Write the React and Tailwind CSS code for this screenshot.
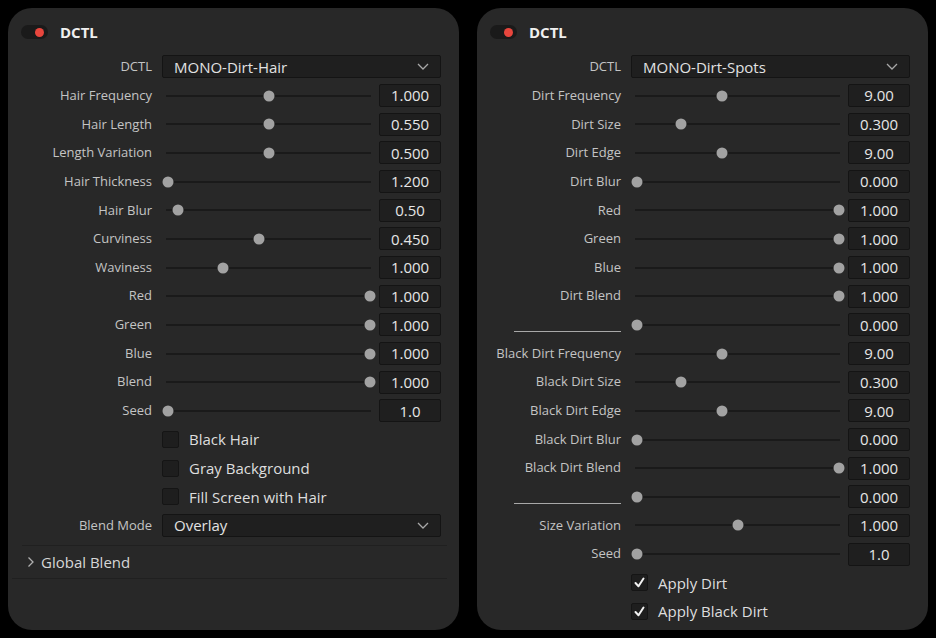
import React from 'react';

const leftSliders = [
  { label: 'Hair Frequency', f: 0.5, value: '1.000' },
  { label: 'Hair Length', f: 0.5, value: '0.550' },
  { label: 'Length Variation', f: 0.5, value: '0.500' },
  { label: 'Hair Thickness', f: 0, value: '1.200' },
  { label: 'Hair Blur', f: 0.05, value: '0.50' },
  { label: 'Curviness', f: 0.45, value: '0.450' },
  { label: 'Waviness', f: 0.27, value: '1.000' },
  { label: 'Red', f: 1, value: '1.000' },
  { label: 'Green', f: 1, value: '1.000' },
  { label: 'Blue', f: 1, value: '1.000' },
  { label: 'Blend', f: 1, value: '1.000' },
  { label: 'Seed', f: 0, value: '1.0' },
];

const rightSliders = [
  { label: 'Dirt Frequency', f: 0.42, value: '9.00' },
  { label: 'Dirt Size', f: 0.22, value: '0.300' },
  { label: 'Dirt Edge', f: 0.42, value: '9.00' },
  { label: 'Dirt Blur', f: 0, value: '0.000' },
  { label: 'Red', f: 1, value: '1.000' },
  { label: 'Green', f: 1, value: '1.000' },
  { label: 'Blue', f: 1, value: '1.000' },
  { label: 'Dirt Blend', f: 1, value: '1.000' },
  { label: null, f: 0, value: '0.000' },
  { label: 'Black Dirt Frequency', f: 0.42, value: '9.00' },
  { label: 'Black Dirt Size', f: 0.22, value: '0.300' },
  { label: 'Black Dirt Edge', f: 0.42, value: '9.00' },
  { label: 'Black Dirt Blur', f: 0, value: '0.000' },
  { label: 'Black Dirt Blend', f: 1, value: '1.000' },
  { label: null, f: 0, value: '0.000' },
  { label: 'Size Variation', f: 0.5, value: '1.000' },
  { label: 'Seed', f: 0, value: '1.0' },
];

const Chevron = () => (
  <svg width="12" height="7" viewBox="0 0 12 7" fill="none">
    <path d="M1 1l5 5 5-5" stroke="#a8a8a8" strokeWidth="1.3" />
  </svg>
);

const Label = ({ children }) => (
  <div className="w-[154px] shrink-0 pr-[10px] text-right text-[13px] text-[#c4c4c4]">{children}</div>
);

const Row = ({ label, children }) => (
  <div className="flex h-[28.67px] items-center">
    <Label>{label}</Label>
    <div className="flex w-[279px] items-center">{children}</div>
  </div>
);

const Dropdown = ({ value }) => (
  <div className="flex h-[23px] w-[279px] items-center justify-between rounded-[2px] border border-[#141414] bg-[#1f1f1f] pl-[11px] pr-[11px] text-[15px] text-[#e2e2e2]">
    <span>{value}</span>
    <Chevron />
  </div>
);

const Slider = ({ f, value }) => (
  <>
    <div className="relative ml-[4px] mr-[8px] h-[2px] flex-1 bg-[#1a1a1a]">
      <div className="absolute inset-y-0 left-[2px] right-[1px]">
        <div
          className="absolute top-1/2 h-[11px] w-[11px] -translate-x-1/2 -translate-y-1/2 rounded-full bg-[#a2a2a2]"
          style={{ left: `${f * 100}%` }}
        />
      </div>
    </div>
    <div className="flex h-[23px] w-[62px] items-center justify-center rounded-[2px] border border-[#141414] bg-[#1f1f1f] text-[15px] text-[#e6e6e6]">
      {value}
    </div>
  </>
);

const Check = ({ checked, label }) => (
  <Row label="">
    <div className="flex h-[17px] w-[17px] items-center justify-center rounded-[2px] border border-[#151515] bg-[#1e1e1e]">
      {checked && (
        <svg width="13" height="13" viewBox="0 0 13 13" fill="none">
          <path d="M2.5 7l3 3.2L10.5 2.5" stroke="#f2f2f2" strokeWidth="2" strokeLinecap="round" strokeLinejoin="round" />
        </svg>
      )}
    </div>
    <span className="ml-[10px] text-[15px] text-[#dedede]">{label}</span>
  </Row>
);

const Header = () => (
  <div className="flex h-[28px] items-center pl-[13px]">
    <div className="flex h-[14px] w-[27px] items-center justify-end rounded-full bg-[#1a1a1a] pr-[4px]">
      <div className="h-[9px] w-[9px] rounded-full bg-[#e8463d]" />
    </div>
    <span className="ml-[12px] text-[15px] font-bold text-[#f0f0f0]">DCTL</span>
  </div>
);

const Panel = ({ children }) => (
  <div className="flex h-[622px] w-[451px] flex-col rounded-[24px] bg-[#282828] pt-[10px]">{children}</div>
);

export default function App() {
  return (
    <div
      className="flex h-[638px] w-[936px] gap-[18px] bg-black pl-[8px] pt-[8px]"
      style={{ fontFamily: '"Open Sans", "Noto Sans", sans-serif' }}
    >
      <Panel>
        <Header />
        <div className="mt-[6.67px]">
          <Row label="DCTL">
            <Dropdown value="MONO-Dirt-Hair" />
          </Row>
          {leftSliders.map((s) => (
            <Row key={s.label} label={s.label}>
              <Slider f={s.f} value={s.value} />
            </Row>
          ))}
          <Check label="Black Hair" />
          <Check label="Gray Background" />
          <Check label="Fill Screen with Hair" />
          <Row label="Blend Mode">
            <Dropdown value="Overlay" />
          </Row>
        </div>
        <div className="ml-[14px] mr-[12px] mt-[5px] border-t border-[#202020]" />
        <div className="flex h-[32px] items-center pl-[19px] text-[15px] text-[#d6d6d6]">
          <svg width="8" height="12" viewBox="0 0 8 12" fill="none">
            <path d="M1.5 1.5l4.5 4.5-4.5 4.5" stroke="#b0b0b0" strokeWidth="1.3" />
          </svg>
          <span className="ml-[6px]">Global Blend</span>
        </div>
        <div className="ml-[4px] mr-[12px] border-t border-[#202020]" />
      </Panel>
      <Panel>
        <Header />
        <div className="mt-[6.67px]">
          <Row label="DCTL">
            <Dropdown value="MONO-Dirt-Spots" />
          </Row>
          {rightSliders.map((s, i) => (
            <Row
              key={i}
              label={
                s.label ?? (
                  <div className="flex justify-end">
                    <div className="mt-[14px] h-[1px] w-[107px] bg-[#a8a8a8]" />
                  </div>
                )
              }
            >
              <Slider f={s.f} value={s.value} />
            </Row>
          ))}
          <Check checked label="Apply Dirt" />
          <Check checked label="Apply Black Dirt" />
        </div>
      </Panel>
    </div>
  );
}
